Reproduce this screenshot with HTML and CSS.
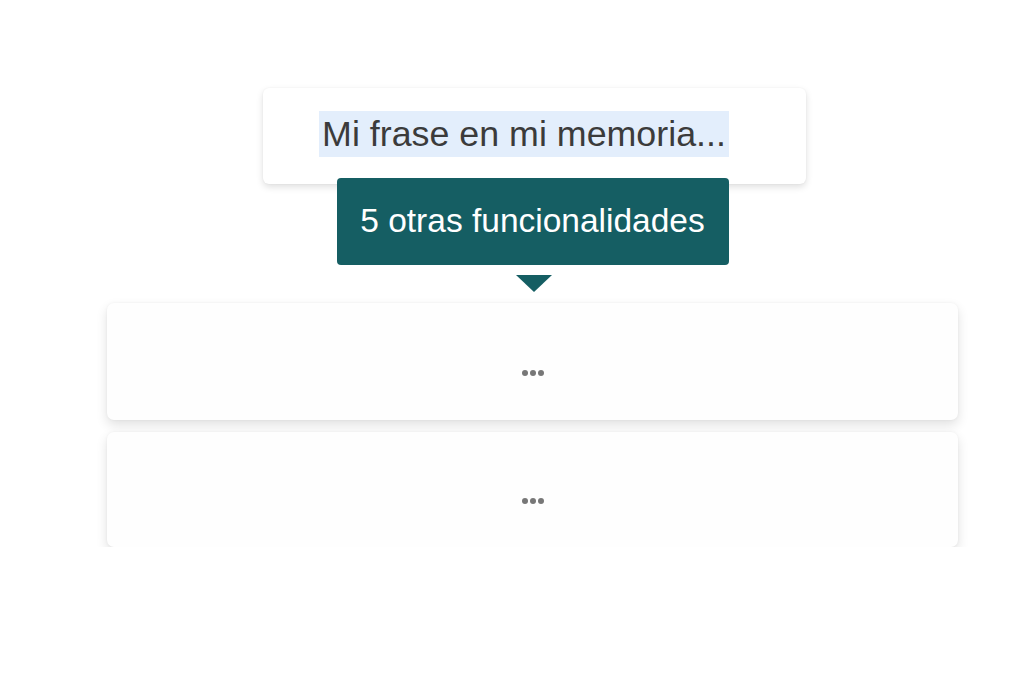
FILE: index.html
```html
<!DOCTYPE html>
<html lang="es">
<head>
<meta charset="utf-8">
<link rel="stylesheet" href="styles.css">
</head>
<body>
<div class="stage">
  <div class="phrase-card">
    <span class="phrase">Mi frase en mi memoria...</span>
  </div>
  <div class="tip">5 otras funcionalidades</div>
  <div class="tip-arrow"></div>
  <div class="list">
    <div class="item"><span class="dots"><i></i><i></i><i></i></span></div>
    <div class="item"><span class="dots"><i></i><i></i><i></i></span></div>
  </div>
</div>
</body>
</html>
```
FILE: styles.css
```css
html, body {
  margin: 0;
  padding: 0;
  background: #ffffff;
  font-family: "Liberation Sans", Arial, Helvetica, sans-serif;
}
.stage {
  width: 851px;
  margin-left: 107px;
  padding-top: 88px;
  display: flex;
  flex-direction: column;
  align-items: center;
}
.phrase-card {
  width: 543px;
  height: 96px;
  box-sizing: border-box;
  background: #fff;
  border-radius: 6px;
  box-shadow: 0 3px 7px rgba(0,0,0,0.13), 0 0 2px rgba(0,0,0,0.06);
  display: flex;
  align-items: center;
  justify-content: center;
  margin-left: 3px;
}
.phrase {
  background: #e3eefc;
  color: #3b3b3b;
  font-size: 35.8px;
  line-height: 46px;
  padding: 0 3px;
  margin-top: -4px;
  margin-left: -20px;
}
.tip {
  position: relative;
  z-index: 2;
  margin-top: -6px;
  width: 392px;
  height: 87px;
  box-sizing: border-box;
  background: #155e63;
  color: #fff;
  border-radius: 4px;
  font-size: 33.5px;
  display: flex;
  align-items: center;
  justify-content: center;
  padding-bottom: 2px;
}
.tip-arrow {
  margin-top: 10px;
  width: 0;
  height: 0;
  border-left: 18px solid transparent;
  border-right: 18px solid transparent;
  border-top: 17px solid #155e63;
  margin-left: 2px;
}
.list {
  align-self: stretch;
  margin-top: 11px;
  display: flex;
  flex-direction: column;
  gap: 12px;
}
.item {
  height: 117px;
  background: #fefefe;
  border-radius: 7px;
  box-shadow: 0 5px 12px rgba(0,0,0,0.12), 0 0 3px rgba(0,0,0,0.05);
  display: flex;
  align-items: center;
  justify-content: center;
}
.item + .item { height: 115px; }
.dots {
  display: flex;
  gap: 2px;
  margin-top: 22px;
}
.dots i {
  width: 6px;
  height: 6px;
  border-radius: 50%;
  background: #777;
}
```
